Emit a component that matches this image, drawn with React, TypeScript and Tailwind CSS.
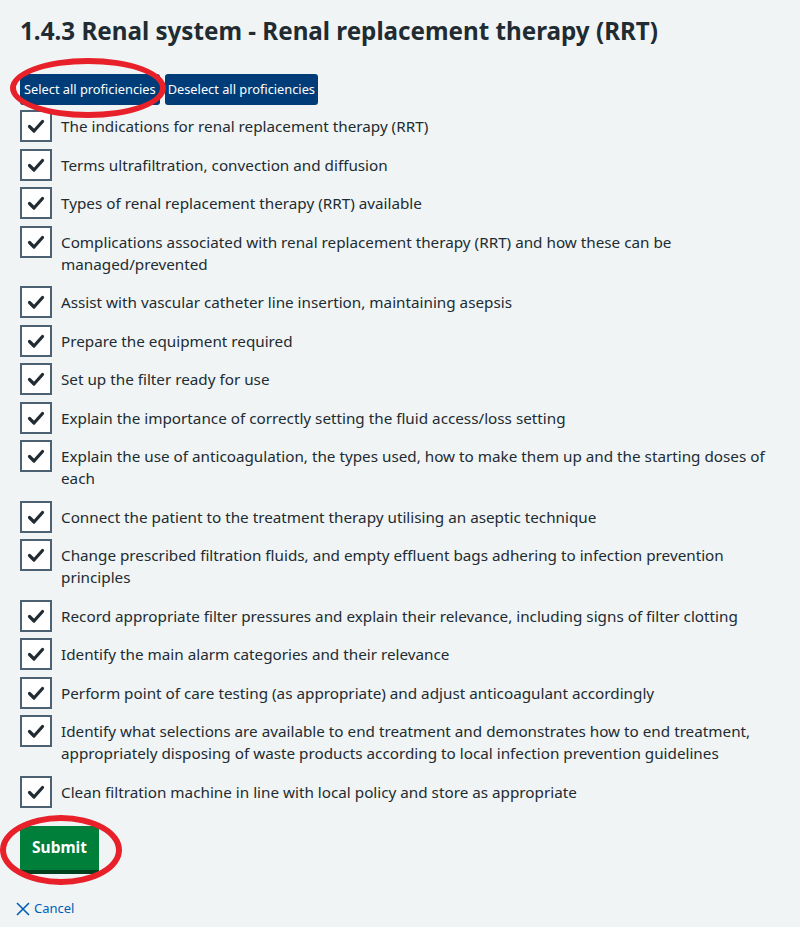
const items = [
  "The indications for renal replacement therapy (RRT)",
  "Terms ultrafiltration, convection and diffusion",
  "Types of renal replacement therapy (RRT) available",
  "Complications associated with renal replacement therapy (RRT) and how these can be managed/prevented",
  "Assist with vascular catheter line insertion, maintaining asepsis",
  "Prepare the equipment required",
  "Set up the filter ready for use",
  "Explain the importance of correctly setting the fluid access/loss setting",
  "Explain the use of anticoagulation, the types used, how to make them up and the starting doses of each",
  "Connect the patient to the treatment therapy utilising an aseptic technique",
  "Change prescribed filtration fluids, and empty effluent bags adhering to infection prevention principles",
  "Record appropriate filter pressures and explain their relevance, including signs of filter clotting",
  "Identify the main alarm categories and their relevance",
  "Perform point of care testing (as appropriate) and adjust anticoagulant accordingly",
  "Identify what selections are available to end treatment and demonstrates how to end treatment, appropriately disposing of waste products according to local infection prevention guidelines",
  "Clean filtration machine in line with local policy and store as appropriate",
];

const Check = () => (
  <svg width="20" height="20" viewBox="0 0 20 20" fill="none">
    <path d="M3.5 10.5 L8 15 L16.5 5.5" stroke="#212b32" strokeWidth="3.2" strokeLinecap="round" strokeLinejoin="round" />
  </svg>
);

const Cross = () => (
  <svg width="14" height="14" viewBox="0 0 14 14" fill="none">
    <path d="M1 1 L13 13 M13 1 L1 13" stroke="#005eb8" strokeWidth="1.6" />
  </svg>
);

export default function App() {
  return (
    <div className="relative min-h-[927px] bg-[#f0f4f5] text-[#212b32] font-['Noto_Sans',sans-serif] px-5 pt-[15px]">
      <h1 className="text-[24.2px] leading-[32px] font-bold mb-[27px]">
        1.4.3 Renal system - Renal replacement therapy (RRT)
      </h1>

      <div className="flex gap-[5px] mb-[5px]">
        <button className="h-[31px] px-[4px] rounded-[3px] bg-[#003d78] text-white text-[12.8px]">
          Select all proficiencies
        </button>
        <button className="h-[31px] px-[3px] rounded-[3px] bg-[#003d78] text-white text-[12.8px]">
          Deselect all proficiencies
        </button>
      </div>

      <ul className="max-w-[770px]">
        {items.map((text) => (
          <li key={text} className="flex mb-[6px]">
            <span className="shrink-0 w-[32px] h-[32px] border-2 border-[#4c6272] bg-white flex items-center justify-center">
              <Check />
            </span>
            <span className="pl-[9px] py-[5.25px] text-[15.25px] leading-[22px]">{text}</span>
          </li>
        ))}
      </ul>

      <button className="mt-[12px] w-[79px] h-[44px] bg-[#007f3b] text-white font-bold text-[15.5px] shadow-[0_4px_0_#00401e]">
        Submit
      </button>

      <a href="#" className="mt-[29px] flex items-center gap-[4px] -ml-[4px] text-[13px] text-[#005eb8]">
        <Cross />
        Cancel
      </a>

      <div className="pointer-events-none absolute left-[10px] top-[58px] w-[156px] h-[60px] rounded-[50%] border-[6px] border-[#e8202a]" />
      <div className="pointer-events-none absolute left-[0px] top-[815px] w-[122px] h-[70px] rounded-[50%] border-[6px] border-[#e8202a]" />
    </div>
  );
}
